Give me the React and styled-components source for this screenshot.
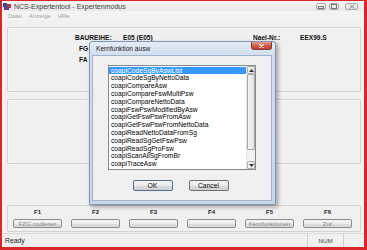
import React from "react";
import styled, { createGlobalStyle } from "styled-components";

const GlobalStyle = createGlobalStyle`
  html, body {
    margin: 0;
    padding: 0;
    background: #ffffff;
  }
  body {
    width: 367px;
    height: 250px;
    overflow: hidden;
    font-family: "Liberation Sans", Arial, sans-serif;
  }
  * {
    box-sizing: border-box;
  }
`;

const functions = [
  "coapiCodeSgByAswList",
  "coapiCodeSgByNettoData",
  "coapiCompareAsw",
  "coapiCompareFswMultiPsw",
  "coapiCompareNettoData",
  "coapiFswPswModifiedByAsw",
  "coapiGetFswPswFromAsw",
  "coapiGetFswPswFromNettoData",
  "coapiReadNettoDataFromSg",
  "coapiReadSgGetFswPsw",
  "coapiReadSgProFsw",
  "coapiScanAllSgFromBr",
  "coapiTraceAsw",
];

const fkeys = [
  { key: "F1", label: "FZG codieren" },
  { key: "F2", label: "" },
  { key: "F3", label: "" },
  { key: "F4", label: "" },
  { key: "F5", label: "Kernfunktionen" },
  { key: "F6", label: "Zur" },
];

const App = () => {
  return (
    <>
      <GlobalStyle />
      <Window>
        <TitleBar>
          <AppIcon width="8" height="7" viewBox="0 0 8 7">
            <rect x="0" y="0" width="8" height="7" fill="#e8e8f0" />
            <rect x="0" y="0" width="4" height="4" fill="#2a4f9e" />
            <rect x="4" y="1" width="4" height="4" fill="#c23434" />
            <rect x="1" y="4" width="5" height="3" fill="#6a3f8c" />
          </AppIcon>
          <Caption>NCS-Expertentool - Expertenmodus</Caption>
          <Controls>
            <CtrlButton>
              <svg width="6" height="4" viewBox="0 0 6 4">
                <rect x="0.5" y="1.5" width="5" height="2" fill="none" stroke="#777" strokeWidth="1" />
              </svg>
            </CtrlButton>
            <CtrlButton>
              <svg width="6" height="5" viewBox="0 0 6 5">
                <rect x="0.5" y="0.5" width="5" height="4" fill="none" stroke="#777" strokeWidth="1" />
              </svg>
            </CtrlButton>
            <CtrlButton $wide>
              <svg width="6" height="5" viewBox="0 0 6 5">
                <path d="M0.5 0.5 L5.5 4.5 M5.5 0.5 L0.5 4.5" stroke="#8a8a8a" strokeWidth="1" />
              </svg>
            </CtrlButton>
          </Controls>
        </TitleBar>

        <MenuBar>
          <MenuItem>Datei</MenuItem>
          <MenuItem>Anzeige</MenuItem>
          <MenuItem>Hilfe</MenuItem>
        </MenuBar>

        <Client>
          <GroupBox>
            <InfoGrid>
              <Label>BAUREIHE:</Label>
              <Value>E05 (E05)</Value>
              <Label>Nael-Nr.:</Label>
              <Value>EEX99.S</Value>
              <Label $indent>FG</Label>
              <Value />
              <Label />
              <Value />
              <Label $indent>FA</Label>
            </InfoGrid>
          </GroupBox>

          <GroupBox $gap />

          <Spacer />

          <KeyGroup>
            {fkeys.map((f) => (
              <KeyLabel key={f.key}>{f.key}</KeyLabel>
            ))}
            {fkeys.map((f) => (
              <KeyButton key={f.key + "b"}>{f.label}</KeyButton>
            ))}
          </KeyGroup>
        </Client>

        <StatusBar>
          <StatusText>Ready</StatusText>
          <StatusPanel>NUM</StatusPanel>
          <StatusGrip />
        </StatusBar>

        <Dialog>
          <DialogTitle>Kernfunktion ausw</DialogTitle>
          <CloseButton>
            <svg width="5" height="4" viewBox="0 0 5 4">
              <path d="M0.5 0.3 L4.5 3.7 M4.5 0.3 L0.5 3.7" stroke="#fff" strokeWidth="1.1" />
            </svg>
          </CloseButton>
          <DialogClient>
            <ListBox>
              <ListItems>
                {functions.map((name, i) => (
                  <ListItem key={name} $selected={i === 0}>
                    {name}
                  </ListItem>
                ))}
              </ListItems>
              <ScrollBar>
                <ScrollArrow>
                  <svg width="5" height="3" viewBox="0 0 5 3">
                    <path d="M0 3 L2.5 0 L5 3 Z" fill="#333" />
                  </svg>
                </ScrollArrow>
                <ScrollThumb />
                <ScrollTrack />
                <ScrollArrow>
                  <svg width="5" height="3" viewBox="0 0 5 3">
                    <path d="M0 0 L2.5 3 L5 0 Z" fill="#333" />
                  </svg>
                </ScrollArrow>
              </ScrollBar>
            </ListBox>
            <ButtonRow>
              <DialogButton $default>OK</DialogButton>
              <DialogButton>Cancel</DialogButton>
            </ButtonRow>
          </DialogClient>
        </Dialog>
      </Window>
    </>
  );
};

export default App;

const Window = styled.div`
  position: relative;
  width: 367px;
  height: 250px;
  border-style: solid;
  border-color: #d8262b;
  border-width: 1px 3px 3px 2px;
  background: #f0f0f0;
  display: flex;
  flex-direction: column;
`;

const TitleBar = styled.div`
  height: 10px;
  display: flex;
  align-items: center;
  padding-left: 1px;
  background: linear-gradient(to bottom, #f6f6f6, #e9e9e9);
`;

const AppIcon = styled.svg`
  display: block;
`;

const Caption = styled.span`
  margin-left: 3px;
  font-size: 7px;
  color: #3a3a3a;
  white-space: nowrap;
`;

const Controls = styled.div`
  margin-left: auto;
  margin-right: 6px;
  display: flex;
  gap: 3px;
  align-self: flex-start;
  margin-top: 2px;
`;

const CtrlButton = styled.div`
  width: ${(p) => (p.$wide ? "13px" : "10px")};
  height: 7px;
  margin-left: ${(p) => (p.$wide ? "3px" : "0")};
  border: 1px solid #a9a9a9;
  border-radius: 2px;
  background: linear-gradient(to bottom, #fbfbfb, #e2e2e2);
  display: flex;
  align-items: center;
  justify-content: center;
`;

const MenuBar = styled.div`
  height: 9px;
  display: flex;
  align-items: center;
  gap: 7px;
  padding-left: 6px;
  background: #f3f3f3;
`;

const MenuItem = styled.span`
  font-size: 6px;
  color: #a3a3a3;
`;

const Client = styled.div`
  flex: 1;
  display: flex;
  flex-direction: column;
  padding: 7px 3px 1px 5px;
  background: #f0f0f0;
`;

const GroupBox = styled.div`
  height: 65px;
  margin-top: ${(p) => (p.$gap ? "7px" : "0")};
  border: 1px solid #d3d3d3;
  border-radius: 2px;
  box-shadow: inset 1px 1px 0 #fafafa;
  padding: 4px 0 0 67px;
`;

const InfoGrid = styled.div`
  display: grid;
  grid-template-columns: 48px 130px 47px 1fr;
  grid-auto-rows: 11px;
  align-items: center;
`;

const Label = styled.span`
  font-size: 6.6px;
  font-weight: bold;
  color: #111;
  padding-left: ${(p) => (p.$indent ? "4px" : "0")};
  white-space: nowrap;
`;

const Value = styled.span`
  font-size: 6.6px;
  font-weight: bold;
  color: #111;
  white-space: nowrap;
`;

const Spacer = styled.div`
  flex: 1;
`;

const KeyGroup = styled.div`
  height: 27px;
  border: 1px solid #d3d3d3;
  border-radius: 2px;
  padding: 2px 5px 0;
  display: grid;
  grid-template-columns: repeat(6, 49px);
  grid-template-rows: 8px 9px;
  column-gap: 9px;
  row-gap: 3px;
`;

const KeyLabel = styled.div`
  font-size: 6px;
  font-weight: bold;
  color: #222;
  text-align: center;
  line-height: 8px;
`;

const KeyButton = styled.div`
  border: 1px solid #8c8c8c;
  border-radius: 2px;
  background: linear-gradient(to bottom, #f4f4f4, #ececec 50%, #dedede 51%, #d8d8d8);
  font-size: 6.2px;
  color: #858585;
  display: flex;
  align-items: center;
  justify-content: center;
  white-space: nowrap;
`;

const StatusBar = styled.div`
  height: 14px;
  display: flex;
  align-items: center;
  border-top: 1px solid #d9d9d9;
  background: #f0f0f0;
`;

const StatusText = styled.span`
  padding-left: 3px;
  font-size: 6.8px;
  color: #222;
`;

const StatusPanel = styled.div`
  margin-left: auto;
  width: 37px;
  height: 100%;
  border-left: 1px solid #cfcfcf;
  border-right: 1px solid #cfcfcf;
  font-size: 6.2px;
  color: #444;
  display: flex;
  align-items: center;
  justify-content: center;
`;

const StatusGrip = styled.div`
  width: 20px;
  height: 100%;
`;

const Dialog = styled.div`
  position: absolute;
  left: 87px;
  top: 40px;
  width: 187px;
  height: 164px;
  border: 1px solid #7d98b8;
  border-radius: 3px 3px 0 0;
  background: linear-gradient(to bottom, #e4ecf5, #d1deec 14px, #c8d7e7);
  padding: 0 3px 3px 2px;
  display: flex;
  flex-direction: column;
  box-shadow: 2px 2px 4px rgba(0, 0, 0, 0.35);
`;

const DialogTitle = styled.div`
  height: 13px;
  display: flex;
  align-items: center;
  padding-left: 4px;
  font-size: 6.6px;
  color: #222;
`;

const CloseButton = styled.div`
  position: absolute;
  right: 3px;
  top: 0;
  width: 21px;
  height: 8px;
  border: 1px solid #8a3a3a;
  border-top: none;
  border-radius: 0 0 3px 3px;
  background: linear-gradient(to bottom, #e8a090, #d0604f 50%, #c0402e);
  display: flex;
  align-items: center;
  justify-content: center;
`;

const DialogClient = styled.div`
  flex: 1;
  background: #f0f0f0;
  border: 1px solid #9fb3ca;
  display: flex;
  flex-direction: column;
  padding: 9px 15px 0;
`;

const ListBox = styled.div`
  height: 105px;
  border: 1px solid #828790;
  background: #ffffff;
  display: flex;
`;

const ListItems = styled.div`
  flex: 1;
  padding-top: 0.6px;
  overflow: hidden;
`;

const ListItem = styled.div`
  height: 7.8px;
  line-height: 7.8px;
  padding-left: 2px;
  font-size: 6.7px;
  white-space: nowrap;
  color: ${(p) => (p.$selected ? "#ffffff" : "#000000")};
  background: ${(p) => (p.$selected ? "#3399ff" : "transparent")};
`;

const ScrollBar = styled.div`
  width: 9px;
  display: flex;
  flex-direction: column;
  background: #f2f2f2;
  border-left: 1px solid #e4e4e4;
`;

const ScrollArrow = styled.div`
  height: 8px;
  border: 1px solid #b3b3b3;
  border-radius: 1px;
  background: linear-gradient(to right, #f6f6f6, #e2e2e2);
  display: flex;
  align-items: center;
  justify-content: center;
`;

const ScrollThumb = styled.div`
  height: 76px;
  border: 1px solid #a8a8a8;
  border-radius: 1px;
  background: linear-gradient(to right, #f4f4f4, #e0e0e0);
`;

const ScrollTrack = styled.div`
  flex: 1;
`;

const ButtonRow = styled.div`
  margin-top: 10px;
  display: flex;
  justify-content: center;
  gap: 16px;
  padding-right: 3px;
`;

const DialogButton = styled.div`
  width: 40px;
  height: 11px;
  border: 1px solid ${(p) => (p.$default ? "#4a6f92" : "#707070")};
  border-radius: 2px;
  background: linear-gradient(to bottom, #f4f4f4, #ebebeb 50%, #dddddd 51%, #d0d0d0);
  font-size: 6.8px;
  color: #111;
  display: flex;
  align-items: center;
  justify-content: center;
`;
